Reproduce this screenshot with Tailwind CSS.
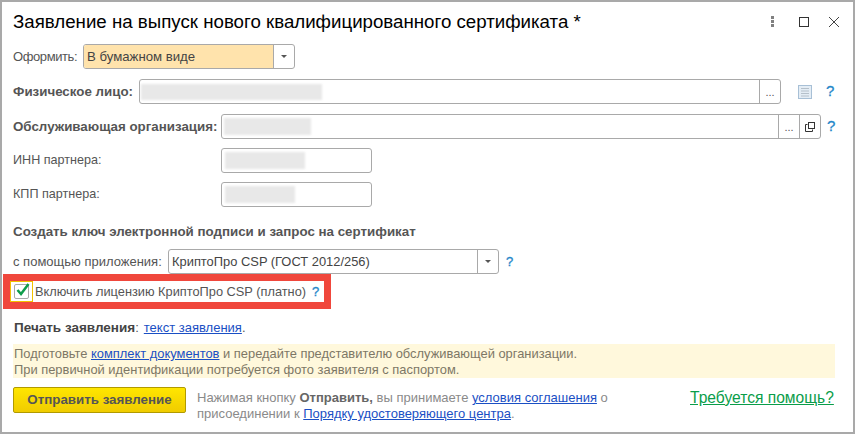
<!doctype html>
<html lang="ru">
  <head>
    <meta charset="UTF-8" />
    <title>Заявление</title>
    <script src="https://cdn.jsdelivr.net/npm/@tailwindcss/browser@4"></script>
  </head>
  <body class="bg-white">
    <div class="relative w-[855px] h-[434px] overflow-hidden border-2 border-[#a9a9a9] bg-white font-['Liberation_Sans',Arial,sans-serif] text-[13px] text-[#555]">
      <!-- заголовок -->
      <div class="flex items-center h-[40px] pl-[11px] pr-[14px]">
        <h1 class="flex-1 text-[18.7px] text-black whitespace-nowrap">Заявление на выпуск нового квалифицированного сертификата *</h1>
        <div class="flex flex-col gap-[1px] mr-[25px] -mt-[1px]">
          <span class="w-[3px] h-[3px] bg-[#808080]"></span>
          <span class="w-[3px] h-[3px] bg-[#808080]"></span>
          <span class="w-[3px] h-[3px] bg-[#808080]"></span>
        </div>
        <span class="w-[10px] h-[10px] border border-[#333] mr-[20px] -mt-[1px]"></span>
        <svg width="10" height="10" viewBox="0 0 10 10" class="text-[#444] -mt-[1px]"><path d="M0 0L10 10M10 0L0 10" stroke="currentColor" fill="none" /></svg>
      </div>

      <div class="pl-[11px]">
        <!-- оформить -->
        <div class="flex items-center h-[25px] mt-[2px]">
          <span class="w-[70px] whitespace-nowrap tracking-[-0.4px]">Оформить:</span>
          <div class="flex w-[212px] h-[25px] border border-[#a9a9a9] rounded-[3px] overflow-hidden">
            <div class="flex-1 bg-[#ffe3ac] pl-[3px] leading-[23px] text-[13.2px] text-[#444]">В бумажном виде</div>
            <div class="flex items-center justify-center w-[21px] border-l border-[#a9a9a9]"><span class="border-x-[3px] border-x-transparent border-t-[3px] border-t-[#555]"></span></div>
          </div>
        </div>

        <!-- физическое лицо -->
        <div class="flex items-center h-[25px] mt-[10px]">
          <b class="w-[126px] whitespace-nowrap text-[13.33px]">Физическое лицо:</b>
          <div class="flex w-[642px] h-[25px] border border-[#a9a9a9] rounded-[3px]">
            <div class="flex-1 pt-[4px] pl-[1px]"><div class="w-[181px] h-[16px] bg-[#e8e8e8] blur-[1px]"></div></div>
            <div class="w-[21px] border-l border-[#a9a9a9] text-center leading-[25px] text-[11px]">...</div>
          </div>
          <svg width="14" height="14" viewBox="0 0 14 14" class="ml-[17px]"><rect x="0.5" y="0.5" width="13" height="13" fill="#e4edf5" stroke="#a8c0d6" /><path d="M3 3.5H11M3 6H11M3 8.5H11M3 11H11" stroke="#b5c0ca" /></svg>
          <span class="ml-[14px] text-[15px] text-[#1f86c9] [-webkit-text-stroke:0.3px_#1f86c9]">?</span>
        </div>

        <!-- обслуживающая организация -->
        <div class="flex items-center h-[25px] mt-[10px]">
          <b class="w-[208px] whitespace-nowrap text-[13.33px]">Обслуживающая организация:</b>
          <div class="flex w-[600px] h-[25px] border border-[#a9a9a9] rounded-[3px]">
            <div class="flex-1 pt-[3px] pl-[2px]"><div class="w-[87px] h-[17px] bg-[#e8e8e8] blur-[1px]"></div></div>
            <div class="w-[21px] border-l border-[#a9a9a9] text-center leading-[25px] text-[11px]">...</div>
            <div class="flex items-center justify-center w-[21px] border-l border-[#a9a9a9]">
              <svg width="10" height="10" viewBox="0 0 10 10"><path d="M2.5 2.5H0.5V9.5H7.5V7.5" fill="none" stroke="#333" /><rect x="3.5" y="0.5" width="6" height="6" fill="none" stroke="#333" /></svg>
            </div>
          </div>
          <span class="ml-[6px] text-[15px] text-[#1f86c9] [-webkit-text-stroke:0.3px_#1f86c9]">?</span>
        </div>

        <!-- ИНН, КПП -->
        <div class="flex items-center h-[25px] mt-[9px]">
          <span class="w-[208px] text-[12.6px]">ИНН партнера:</span>
          <div class="w-[151px] h-[25px] border border-[#a9a9a9] rounded-[3px] pt-[3px] pl-[3px]"><div class="w-[80px] h-[17px] bg-[#e8e8e8] blur-[1px]"></div></div>
        </div>
        <div class="flex items-center h-[25px] mt-[9px]">
          <span class="w-[208px] text-[12.6px]">КПП партнера:</span>
          <div class="w-[151px] h-[25px] border border-[#a9a9a9] rounded-[3px] pt-[3px] pl-[3px]"><div class="w-[70px] h-[17px] bg-[#e8e8e8] blur-[1px]"></div></div>
        </div>

        <b class="block mt-[17px] leading-[15px] text-[13.33px]">Создать ключ электронной подписи и запрос на сертификат</b>

        <div class="flex items-center h-[25px] mt-[10px]">
          <span class="w-[155px] whitespace-nowrap">с помощью приложения:</span>
          <div class="flex w-[331px] h-[25px] border border-[#a9a9a9] rounded-[3px]">
            <div class="flex-1 pl-[3px] leading-[23px] text-[12.9px] text-[#444]">КриптоПро CSP (ГОСТ 2012/256)</div>
            <div class="flex items-center justify-center w-[21px] border-l border-[#a9a9a9]"><span class="border-x-[3px] border-x-transparent border-t-[3px] border-t-[#555]"></span></div>
          </div>
          <span class="ml-[7px] text-[13px] text-[#1f86c9] [-webkit-text-stroke:0.3px_#1f86c9]">?</span>
        </div>

        <!-- лицензия -->
        <div class="flex items-center h-[21px] mt-[7px]">
          <div class="flex items-center justify-center w-[23px] h-[21px] -ml-[3px] border border-[#f2c200]">
            <div class="relative w-[15px] h-[15px] border border-[#a9a9a9] rounded-[2px]">
              <svg width="16" height="15" viewBox="0 0 16 15" class="absolute left-[0px] -top-[3px]"><path d="M2.5 8L6 12L13.5 2" fill="none" stroke="#0f9d4b" stroke-width="2.5" /></svg>
            </div>
          </div>
          <span class="ml-[2px] whitespace-nowrap text-[12.8px]">Включить лицензию КриптоПро CSP (платно)</span>
          <span class="ml-[6px] text-[13px] text-[#1f86c9] [-webkit-text-stroke:0.3px_#1f86c9]">?</span>
        </div>

        <div class="mt-[18px] ml-[1px] leading-[15px]"><b class="text-[13.5px] text-[#444]">Печать заявления</b>:<a class="ml-[5px] text-[#1a4fc4] underline">текст заявления</a>.</div>

        <div class="w-[822px] h-[34px] mt-[9px] bg-[#fff8dc] text-[12.9px] text-[#7d7766] leading-[16px] pt-[2px] pl-[1px]">
          <p>Подготовьте <a class="text-[#1a4fc4] underline">комплект документов</a> и передайте представителю обслуживающей организации.</p>
          <p>При первичной идентификации потребуется фото заявителя с паспортом.</p>
        </div>

        <div class="flex items-start mt-[9px]">
          <button class="w-[173px] h-[26px] rounded-[2px] border border-[#b19a00] bg-gradient-to-b from-[#ffe600] to-[#f0cc00] text-[13.33px] font-bold text-[#555]">Отправить заявление</button>
          <p class="w-[415px] ml-[11px] mt-[3px] leading-[16px] text-[#8a8a8a]">Нажимая кнопку <b class="text-[#666]">Отправить,</b> вы принимаете <a class="text-[#1a4fc4] underline">условия соглашения</a> о присоединении к <a class="text-[#1a4fc4] underline">Порядку удостоверяющего центра</a>.</p>
          <a class="ml-[78px] mt-[1px] text-[15.6px] leading-[20px] text-[#0a9d4a] underline whitespace-nowrap">Требуется помощь?</a>
        </div>
      </div>

      <!-- красная рамка -->
      <div class="absolute left-[1px] top-[272px] w-[328px] h-[35px] border-[7px] border-[#f0473c]"></div>
    </div>
  </body>
</html>
